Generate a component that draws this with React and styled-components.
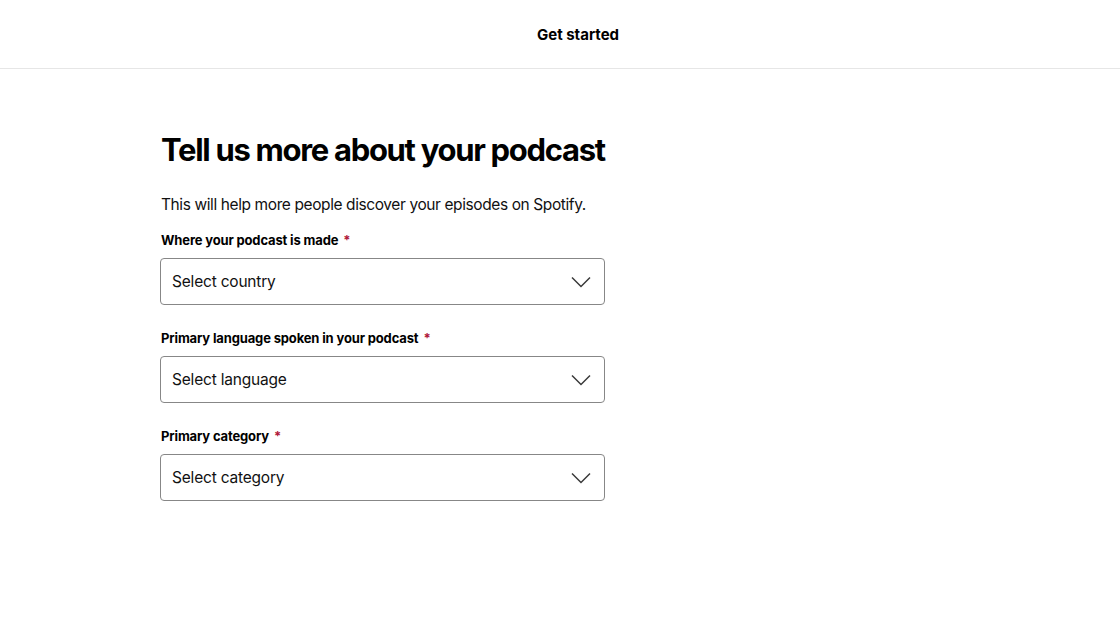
import React from "react";
import styled, { createGlobalStyle } from "styled-components";

const GlobalStyle = createGlobalStyle`
  body {
    margin: 0;
    background: #ffffff;
    font-family: Inter, "Noto Sans", "Liberation Sans", sans-serif;
    color: #000;
  }
`;

const Header = styled.header`
  height: 68px;
  border-bottom: 1px solid #e6e6e6;
  display: flex;
  align-items: center;
  justify-content: center;
`;

const HeaderTitle = styled.h1`
  margin: 0 0 0 36px;
  font-size: 15px;
  font-weight: 700;
  letter-spacing: 0;
`;

const Main = styled.main`
  padding: 61px 0 0 160px;
`;

const Form = styled.div`
  width: 445px;
  display: flex;
  flex-direction: column;
`;

const Heading = styled.h2`
  margin: 0 0 0 1px;
  font-size: 31px;
  line-height: 40px;
  font-weight: 700;
  letter-spacing: -1.3px;
  white-space: nowrap;
`;

const Intro = styled.p`
  margin: 24px 0 0 1px;
  font-size: 15.5px;
  line-height: 22px;
  letter-spacing: -0.4px;
  color: #111;
`;

const Field = styled.div`
  display: flex;
  flex-direction: column;
  margin-top: ${(p) => p.$top}px;
`;

const Label = styled.label`
  margin-left: 1px;
  font-size: 13px;
  line-height: 18px;
  font-weight: 700;
  letter-spacing: -0.15px;
  color: #000;
`;

const Required = styled.span`
  color: #b0173a;
  margin-left: 5px;
`;

const Select = styled.div`
  margin-top: 9px;
  height: 47px;
  box-sizing: border-box;
  border: 1px solid #878787;
  border-radius: 4px;
  display: flex;
  align-items: center;
  justify-content: space-between;
  padding: 0 13px 0 11px;
  font-size: 15.5px;
  letter-spacing: -0.2px;
  color: #111;
  cursor: pointer;
`;

const Chevron = () => (
  <svg width="20" height="12" viewBox="0 0 20 12" fill="none">
    <path d="M1 1.5 L10 10.5 L19 1.5" stroke="#3a3a3a" strokeWidth="1.5" />
  </svg>
);

const fields = [
  { label: "Where your podcast is made", placeholder: "Select country", top: 15 },
  { label: "Primary language spoken in your podcast", placeholder: "Select language", top: 24 },
  { label: "Primary category", placeholder: "Select category", top: 24 },
];

export default function App() {
  return (
    <>
      <GlobalStyle />
      <Header>
        <HeaderTitle>Get started</HeaderTitle>
      </Header>
      <Main>
        <Form>
          <Heading>Tell us more about your podcast</Heading>
          <Intro>This will help more people discover your episodes on Spotify.</Intro>
          {fields.map((f) => (
            <Field key={f.label} $top={f.top}>
              <Label>
                {f.label}
                <Required>*</Required>
              </Label>
              <Select>
                <span>{f.placeholder}</span>
                <Chevron />
              </Select>
            </Field>
          ))}
        </Form>
      </Main>
    </>
  );
}
